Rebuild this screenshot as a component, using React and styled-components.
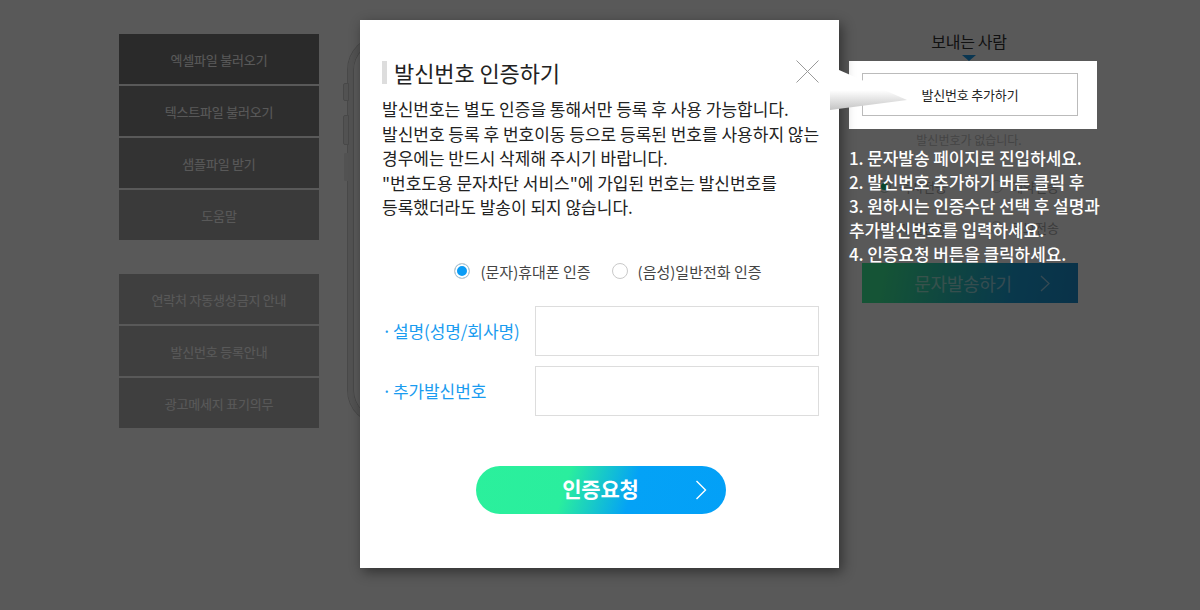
import React from "react";
import styled, { createGlobalStyle } from "styled-components";

const GlobalStyle = createGlobalStyle`
  html, body {
    margin: 0;
    padding: 0;
    background: #fff;
  }
  body {
    font-family: "Noto Sans CJK KR", "Noto Sans", sans-serif;
  }
  * {
    box-sizing: border-box;
  }
`;

const Screen = styled.div`
  position: relative;
  width: 1200px;
  height: 610px;
  overflow: hidden;
  background: #fff;
`;

const Page = styled.div`
  display: flex;
  align-items: flex-start;
  padding: 34px 0 0 119px;
`;

/* left menu */
const Menu = styled.div`
  display: flex;
  flex-direction: column;
  width: 200px;
`;

const MenuGroup = styled.div`
  display: flex;
  flex-direction: column;
  gap: 2px;
  & + & {
    margin-top: 34px;
  }
`;

const MenuItem = styled.div`
  height: 50px;
  display: flex;
  align-items: center;
  justify-content: center;
  background: ${(p) => p.bg};
  color: #fff;
  font-size: 13px;
  letter-spacing: -0.2px;
`;

/* phone preview (mostly hidden by the modal) */
const Phone = styled.div`
  position: relative;
  width: 480px;
  height: 388px;
  margin: 2px 0 0 29px;
  border: 5px solid #eaeaea;
  border-radius: 34px;
  box-shadow: 0 0 0 1px #cdcdcd, inset 0 0 0 1px #cdcdcd;

  &::before,
  &::after {
    content: "";
    position: absolute;
    left: -10px;
    width: 4px;
    border: 1px solid #cdcdcd;
    border-radius: 2px 0 0 2px;
    background: #eaeaea;
  }
  &::before {
    top: 42px;
    height: 16px;
  }
  &::after {
    top: 74px;
    height: 28px;
    box-shadow: 0 37px 0 -1px #eaeaea;
  }
`;

/* right "sender" panel */
const Sender = styled.div`
  position: relative;
  width: 248px;
  margin-left: 21px;
  display: flex;
  flex-direction: column;
  align-items: stretch;
`;

const SenderTitle = styled.div`
  margin: -3px 8px 0 0;
  text-align: center;
  font-size: 16px;
  line-height: 20px;
  color: #333;
  letter-spacing: -0.3px;
`;

const SenderArrow = styled.div`
  align-self: center;
  margin: 4px 8px 0 0;
  width: 0;
  height: 0;
  border-left: 7px solid transparent;
  border-right: 7px solid transparent;
  border-top: 6px solid #1e9be8;
`;

const Highlight = styled.div`
  position: relative;
  z-index: 20;
  background: #fff;
  padding: 12px 19px 13px 13px;
`;

const AddButton = styled.div`
  height: 43px;
  border: 1px solid #bbb;
  display: flex;
  align-items: center;
  justify-content: center;
  font-size: 13px;
  color: #222;
  letter-spacing: -0.2px;
`;

const EmptyNote = styled.div`
  margin: 4px 8px 0 0;
  text-align: center;
  font-size: 12px;
  line-height: 14px;
  color: #c4c4c4;
`;

const SendOptions = styled.div`
  display: grid;
  grid-template-columns: 112px 112px;
  row-gap: 22px;
  padding: 30px 0 0 29px;
`;

const SendOption = styled.div`
  display: flex;
  align-items: center;
  gap: 8px;
  font-size: 13px;
  line-height: 19px;
  color: #aaa;
`;

const SendDot = styled.span`
  width: 13px;
  height: 13px;
  border-radius: 50%;
  border: 1px solid #ccc;
  background: ${(p) => (p.on ? "#22c77a" : "#fff")};
  box-shadow: ${(p) => (p.on ? "inset 0 0 0 2px #fff" : "none")};
`;

const SendButton = styled.div`
  margin: 26px 19px 0 13px;
  height: 40px;
  display: flex;
  align-items: center;
  justify-content: center;
  position: relative;
  padding-right: 14px;
  background: linear-gradient(100deg, #3df09a 10%, #1aa0d8 70%, #1a8fd0 100%);
  color: rgba(255, 255, 255, 0.55);
  font-size: 18px;
  letter-spacing: -0.3px;
`;

const SendChevron = styled.svg`
  position: absolute;
  right: 28px;
  top: 12px;
`;

const Steps = styled.ol`
  position: absolute;
  z-index: 20;
  left: 0;
  top: 112px;
  margin: 0;
  padding: 0;
  list-style: none;
  color: #fff;
  font-size: 17px;
  font-weight: 500;
  line-height: 24px;
  letter-spacing: -0.1px;
  white-space: nowrap;
`;

/* dim overlay */
const Dim = styled.div`
  position: absolute;
  inset: 0;
  z-index: 10;
  background: rgba(0, 0, 0, 0.65);
`;

/* modal */
const Modal = styled.div`
  position: absolute;
  z-index: 20;
  left: 360px;
  top: 20px;
  width: 479px;
  height: 548px;
  background: #fff;
  padding: 41px 20px 0 22px;
  box-shadow: 3px 4px 12px rgba(0, 0, 0, 0.45);
  display: flex;
  flex-direction: column;
`;

const TitleRow = styled.div`
  display: flex;
  align-items: center;
  height: 23px;
`;

const Title = styled.h2`
  margin: 0;
  padding-left: 7px;
  border-left: 5px solid #ddd;
  font-size: 22px;
  line-height: 23px;
  font-weight: 400;
  color: #222;
  letter-spacing: -0.1px;
`;

const Close = styled.button`
  margin-left: auto;
  margin-top: -2px;
  width: 23px;
  height: 23px;
  padding: 0;
  border: 0;
  background: none;
  display: flex;
`;

const Desc = styled.p`
  margin: 13px 0 0;
  font-size: 17px;
  line-height: 24.5px;
  color: #222;
  letter-spacing: 0;
  white-space: nowrap;
`;

const RadioGroup = styled.div`
  margin-top: 41px;
  display: flex;
  justify-content: center;
  gap: 21px;
  padding-left: 15px;
`;

const RadioLabel = styled.label`
  display: flex;
  align-items: center;
  gap: 10px;
  font-size: 15px;
  color: #444;
  letter-spacing: 0;
`;

const RadioMark = styled.span`
  width: 16px;
  height: 16px;
  border-radius: 50%;
  border: 1px solid #c9c9c9;
  background: ${(p) => (p.checked ? "#0a9cf5" : "#fff")};
  box-shadow: ${(p) => (p.checked ? "inset 0 0 0 2px #fff" : "none")};
`;

const Fields = styled.div`
  margin-top: 24px;
  display: flex;
  flex-direction: column;
  gap: 10px;
`;

const FieldRow = styled.div`
  display: flex;
  align-items: center;
`;

const FieldLabel = styled.div`
  width: 153px;
  font-size: 17px;
  color: #1a9cf0;
  letter-spacing: -0.1px;
  white-space: nowrap;
  &::before {
    content: "·";
    display: inline-block;
    width: 11px;
  }
`;

const FieldInput = styled.input`
  flex: 1;
  height: 50px;
  border: 1px solid #ddd;
  outline: none;
  padding: 0 12px;
  font-family: inherit;
  font-size: 15px;
`;

const Submit = styled.button`
  position: relative;
  margin: 50px auto 0;
  width: 250px;
  height: 48px;
  border: 0;
  border-radius: 24px;
  background: linear-gradient(108deg, #2bf09c 0%, #2aee9e 36%, #04a2f6 62%, #03a0f7 100%);
  color: #fff;
  font-family: inherit;
  font-size: 21px;
  font-weight: 700;
  letter-spacing: -0.2px;
  display: flex;
  align-items: center;
  justify-content: center;
  padding: 0 0 3px;
`;

const SubmitChevron = styled.svg`
  position: absolute;
  right: 19px;
  top: 14px;
`;

/* white callout pointing from the modal to the highlighted button */
const Callout = styled.svg`
  position: absolute;
  z-index: 25;
  left: 830px;
  top: 60px;
`;

const menuTop = [
  { label: "엑셀파일 불러오기", bg: "#7a7a7a" },
  { label: "텍스트파일 불러오기", bg: "#858585" },
  { label: "샘플파일 받기", bg: "#939393" },
  { label: "도움말", bg: "#a6a6a6" },
];

const menuBottom = [
  { label: "연락처 자동생성금지 안내", bg: "#b5b5b5" },
  { label: "발신번호 등록안내", bg: "#b5b5b5" },
  { label: "광고메세지 표기의무", bg: "#b5b5b5" },
];

const steps = [
  "1. 문자발송 페이지로 진입하세요.",
  "2. 발신번호 추가하기 버튼 클릭 후",
  "3. 원하시는 인증수단 선택 후 설명과",
  "추가발신번호를 입력하세요.",
  "4. 인증요청 버튼을 클릭하세요.",
];

export default function App() {
  return (
    <Screen>
      <GlobalStyle />
      <Page>
        <Menu>
          <MenuGroup>
            {menuTop.map((m) => (
              <MenuItem key={m.label} bg={m.bg}>
                {m.label}
              </MenuItem>
            ))}
          </MenuGroup>
          <MenuGroup>
            {menuBottom.map((m) => (
              <MenuItem key={m.label} bg={m.bg}>
                {m.label}
              </MenuItem>
            ))}
          </MenuGroup>
        </Menu>

        <Phone />

        <Sender>
          <SenderTitle>보내는 사람</SenderTitle>
          <SenderArrow />
          <Highlight>
            <AddButton>발신번호 추가하기</AddButton>
          </Highlight>
          <EmptyNote>발신번호가 없습니다.</EmptyNote>
          <SendOptions>
            <SendOption>
              <SendDot on />
              즉시전송
            </SendOption>
            <SendOption>
              <SendDot />
              예약전송
            </SendOption>
            <SendOption>
              <SendDot />
              개별전송
            </SendOption>
            <SendOption>
              <SendDot />
              동보전송
            </SendOption>
          </SendOptions>
          <SendButton>
            문자발송하기
            <SendChevron width="10" height="17" viewBox="0 0 10 17">
              <path d="M1 1l8 7.5L1 16" fill="none" stroke="rgba(255,255,255,0.55)" strokeWidth="1.3" />
            </SendChevron>
          </SendButton>
          <Steps>
            {steps.map((s) => (
              <li key={s}>{s}</li>
            ))}
          </Steps>
        </Sender>
      </Page>

      <Dim />

      <Callout width="90" height="60" viewBox="0 0 90 60">
        <defs>
          <linearGradient id="calloutShade" x1="0" y1="0" x2="0" y2="1">
            <stop offset="0" stopColor="#fff" />
            <stop offset="0.55" stopColor="#fff" />
            <stop offset="1" stopColor="#c4c4c4" />
          </linearGradient>
        </defs>
        <polygon points="0,6 77,40 0,50" fill="url(#calloutShade)" />
      </Callout>

      <Modal>
        <TitleRow>
          <Title>발신번호 인증하기</Title>
          <Close aria-label="닫기">
            <svg width="23" height="23" viewBox="0 0 23 23">
              <path d="M0.5 0.5l22 22M22.5 0.5l-22 22" stroke="#9a9a9a" strokeWidth="1" />
            </svg>
          </Close>
        </TitleRow>
        <Desc>
          발신번호는 별도 인증을 통해서만 등록 후 사용 가능합니다.
          <br />
          발신번호 등록 후 번호이동 등으로 등록된 번호를 사용하지 않는
          <br />
          경우에는 반드시 삭제해 주시기 바랍니다.
          <br />
          "번호도용 문자차단 서비스"에 가입된 번호는 발신번호를
          <br />
          등록했더라도 발송이 되지 않습니다.
        </Desc>
        <RadioGroup>
          <RadioLabel>
            <RadioMark checked />
            (문자)휴대폰 인증
          </RadioLabel>
          <RadioLabel>
            <RadioMark />
            (음성)일반전화 인증
          </RadioLabel>
        </RadioGroup>
        <Fields>
          <FieldRow>
            <FieldLabel>설명(성명/회사명)</FieldLabel>
            <FieldInput />
          </FieldRow>
          <FieldRow>
            <FieldLabel>추가발신번호</FieldLabel>
            <FieldInput />
          </FieldRow>
        </Fields>
        <Submit>
          인증요청
          <SubmitChevron width="12" height="20" viewBox="0 0 12 20">
            <path d="M1.5 1l9 9-9 9" fill="none" stroke="#fff" strokeWidth="1.4" />
          </SubmitChevron>
        </Submit>
      </Modal>
    </Screen>
  );
}
